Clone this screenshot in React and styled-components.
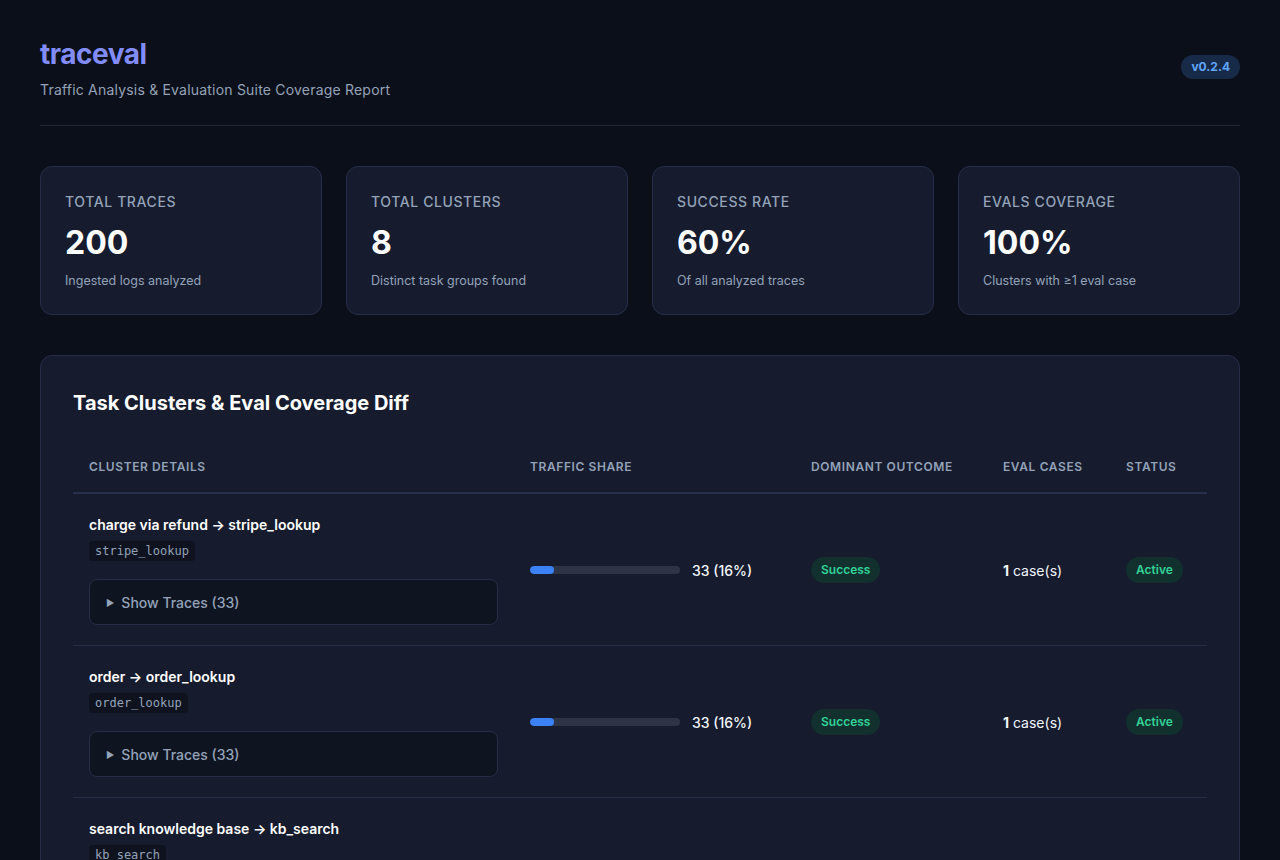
import React from 'react';
import styled, { createGlobalStyle } from 'styled-components';

const GlobalStyle = createGlobalStyle`
  html, body {
    margin: 0;
    padding: 0;
    background: #0b0f19;
    color: #e2e8f0;
    font-family: Inter, "Noto Sans", sans-serif;
  }
  * { box-sizing: border-box; }
`;

const Page = styled.div`
  max-width: 1280px;
  padding: 34px 40px 40px;
`;

const Header = styled.header`
  display: flex;
  justify-content: space-between;
  align-items: flex-start;
  padding-bottom: 25px;
  border-bottom: 1px solid #1f2737;
  margin-bottom: 40px;
`;

const Title = styled.h1`
  margin: 0;
  font-size: 28px;
  line-height: 40px;
  font-weight: 700;
  color: #818cf8;
  letter-spacing: -0.5px;
`;

const Subtitle = styled.p`
  margin: 6px 0 0;
  font-size: 14px;
  line-height: 20px;
  letter-spacing: 0.2px;
  color: #94a3b8;
`;

const Version = styled.span`
  margin-top: 21px;
  padding: 4px 10px;
  border-radius: 999px;
  background: #172a48;
  color: #60a5fa;
  font-size: 12px;
  font-weight: 700;
  line-height: 16px;
`;

const StatsGrid = styled.div`
  display: grid;
  grid-template-columns: repeat(4, 1fr);
  gap: 24px;
  margin-bottom: 40px;
`;

const StatCard = styled.div`
  background: #161b2e;
  border: 1px solid #262e47;
  border-radius: 12px;
  padding: 26px 24px 24px;
  height: 149px;
`;

const StatLabel = styled.div`
  font-size: 14px;
  line-height: 18px;
  font-weight: 500;
  letter-spacing: 0.6px;
  text-transform: uppercase;
  color: #94a3b8;
`;

const StatValue = styled.div`
  margin-top: 12px;
  font-size: 32px;
  line-height: 40px;
  font-weight: 700;
  color: #ffffff;
`;

const StatSub = styled.div`
  margin-top: 9px;
  font-size: 12.5px;
  line-height: 18px;
  color: #94a3b8;
`;

const Panel = styled.section`
  background: #161b2e;
  border: 1px solid #262e47;
  border-radius: 12px;
  padding: 33px 32px 32px;
`;

const PanelTitle = styled.h2`
  margin: 0 0 29px;
  font-size: 20px;
  line-height: 28px;
  font-weight: 700;
  color: #ffffff;
`;

const Table = styled.table`
  width: 100%;
  border-collapse: collapse;
  table-layout: fixed;
`;

const Th = styled.th`
  text-align: left;
  padding: 13px 16px 17px;
  font-size: 12px;
  line-height: 16px;
  font-weight: 600;
  letter-spacing: 0.6px;
  text-transform: uppercase;
  color: #94a3b8;
  border-bottom: 2px solid #27304a;
`;

const Tr = styled.tr`
  border-bottom: 1px solid #262e47;
`;

const Td = styled.td`
  padding: 21px 16px 20px;
  vertical-align: middle;
  font-size: 14px;
  color: #f1f5f9;
`;

const ClusterName = styled.div`
  font-size: 14px;
  line-height: 20px;
  font-weight: 600;
  color: #ffffff;
`;

const Code = styled.code`
  display: inline-block;
  margin-top: 6px;
  padding: 2px 6px;
  border-radius: 4px;
  background: #0f1320;
  font-family: "DejaVu Sans Mono", "Liberation Mono", monospace;
  font-size: 12px;
  line-height: 16px;
  color: #94a3b8;
`;

const TraceBox = styled.div`
  margin-top: 18px;
  height: 46px;
  border: 1px solid #262e47;
  border-radius: 8px;
  background: #0f1421;
  display: flex;
  align-items: center;
  gap: 7px;
  padding: 0 16px;
  font-size: 14px;
  font-weight: 500;
  color: #94a3b8;
`;

const Caret = styled.span`
  font-size: 9px;
  line-height: 1;
`;

const ShareWrap = styled.div`
  display: flex;
  align-items: center;
  gap: 12px;
`;

const Track = styled.div`
  width: 150px;
  height: 8px;
  border-radius: 999px;
  background: #2d3446;
  overflow: hidden;
`;

const Fill = styled.div`
  height: 100%;
  border-radius: 999px;
  background: #3b82f6;
`;

const ShareText = styled.span`
  font-size: 14px;
  font-weight: 500;
  color: #f1f5f9;
`;

const Pill = styled.span`
  display: inline-block;
  padding: 5px 10px;
  border-radius: 999px;
  background: #11302e;
  color: #34d399;
  font-size: 12px;
  line-height: 16px;
  font-weight: 600;
`;

const stats = [
  { label: 'Total Traces', value: '200', sub: 'Ingested logs analyzed' },
  { label: 'Total Clusters', value: '8', sub: 'Distinct task groups found' },
  { label: 'Success Rate', value: '60%', sub: 'Of all analyzed traces' },
  { label: 'Evals Coverage', value: '100%', sub: 'Clusters with ≥1 eval case' },
];

const clusters = [
  { name: 'charge via refund → stripe_lookup', tool: 'stripe_lookup', count: 33, pct: 16 },
  { name: 'order → order_lookup', tool: 'order_lookup', count: 33, pct: 16 },
  { name: 'search knowledge base → kb_search', tool: 'kb_search', count: 31, pct: 15 },
];

const App = () => (
  <>
    <GlobalStyle />
    <Page>
      <Header>
        <div>
          <Title>traceval</Title>
          <Subtitle>Traffic Analysis &amp; Evaluation Suite Coverage Report</Subtitle>
        </div>
        <Version>v0.2.4</Version>
      </Header>

      <StatsGrid>
        {stats.map((s) => (
          <StatCard key={s.label}>
            <StatLabel>{s.label}</StatLabel>
            <StatValue>{s.value}</StatValue>
            <StatSub>{s.sub}</StatSub>
          </StatCard>
        ))}
      </StatsGrid>

      <Panel>
        <PanelTitle>Task Clusters &amp; Eval Coverage Diff</PanelTitle>
        <Table>
          <colgroup>
            <col style={{ width: 441 }} />
            <col style={{ width: 281 }} />
            <col style={{ width: 192 }} />
            <col style={{ width: 123 }} />
            <col />
          </colgroup>
          <thead>
            <tr>
              <Th>Cluster Details</Th>
              <Th>Traffic Share</Th>
              <Th>Dominant Outcome</Th>
              <Th>Eval Cases</Th>
              <Th>Status</Th>
            </tr>
          </thead>
          <tbody>
            {clusters.map((c) => (
              <Tr key={c.name}>
                <Td>
                  <ClusterName>{c.name}</ClusterName>
                  <Code>{c.tool}</Code>
                  <TraceBox>
                    <Caret>▶</Caret>
                    Show Traces ({c.count})
                  </TraceBox>
                </Td>
                <Td>
                  <ShareWrap>
                    <Track>
                      <Fill style={{ width: `${c.pct}%` }} />
                    </Track>
                    <ShareText>
                      {c.count} ({c.pct}%)
                    </ShareText>
                  </ShareWrap>
                </Td>
                <Td>
                  <Pill>Success</Pill>
                </Td>
                <Td>
                  <strong>1</strong> case(s)
                </Td>
                <Td>
                  <Pill>Active</Pill>
                </Td>
              </Tr>
            ))}
          </tbody>
        </Table>
      </Panel>
    </Page>
  </>
);

export default App;
